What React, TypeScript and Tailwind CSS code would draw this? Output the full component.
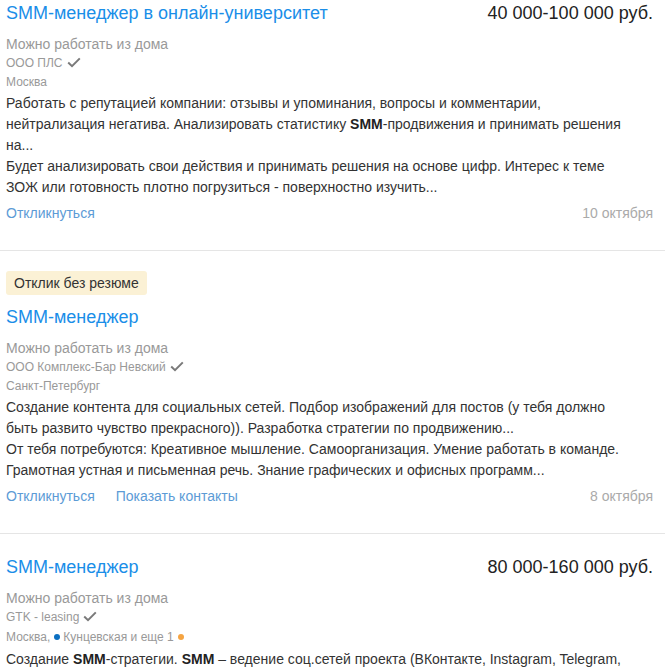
import React from 'react';

function Check() {
  return (
    <svg width="14" height="11" viewBox="0 0 14 11" className="inline-block ml-[4px] align-[-1px]">
      <path d="M1.2 5.6 L5 9.2 L12.8 1.4" fill="none" stroke="#7a7a7a" strokeWidth="2" />
    </svg>
  );
}

function Dot({ color }: { color: string }) {
  return <span className={`inline-block w-[6px] h-[6px] rounded-full mx-[4px] align-[1px] ${color}`} />;
}

type Vacancy = {
  badge?: boolean;
  title: string;
  salary?: string;
  company: string;
  city: React.ReactNode;
  desc: React.ReactNode;
  contacts?: boolean;
  date?: string;
  pt: string;
};

const vacancies: Vacancy[] = [
  {
    title: 'SMM-менеджер в онлайн-университет',
    salary: '40 000-100 000 руб.',
    company: 'ООО ПЛС',
    city: 'Москва',
    desc: (
      <>
        <p>
          Работать с репутацией компании: отзывы и упоминания, вопросы и комментарии, нейтрализация негатива.
          Анализировать статистику <b className="text-[#222]">SMM</b>-продвижения и принимать решения на...
        </p>
        <p>
          Будет анализировать свои действия и принимать решения на основе цифр. Интерес к теме ЗОЖ или готовность
          плотно погрузиться - поверхностно изучить...
        </p>
      </>
    ),
    date: '10 октября',
    pt: 'pt-[3px]',
  },
  {
    badge: true,
    title: 'SMM-менеджер',
    company: 'ООО Комплекс-Бар Невский',
    city: 'Санкт-Петербург',
    desc: (
      <>
        <p>
          Создание контента для социальных сетей. Подбор изображений для постов (у тебя должно быть развито чувство
          прекрасного)). Разработка стратегии по продвижению...
        </p>
        <p>
          От тебя потребуются: Креативное мышление. Самоорганизация. Умение работать в команде. Грамотная устная и
          письменная речь. Знание графических и офисных программ...
        </p>
      </>
    ),
    contacts: true,
    date: '8 октября',
    pt: 'pt-[20px]',
  },
  {
    title: 'SMM-менеджер',
    salary: '80 000-160 000 руб.',
    company: 'GTK - leasing',
    city: (
      <>
        Москва,
        <Dot color="bg-[#0b6fc1]" />
        <span className="-ml-[1px]">Кунцевская и еще 1</span>
        <Dot color="bg-[#f5a442]" />
      </>
    ),
    desc: (
      <p>
        Создание <b className="text-[#222]">SMM</b>-стратегии. <b className="text-[#222]">SMM</b> – ведение
        соц.сетей проекта (ВКонтакте, Instagram, Telegram, YouTube) и ведение рекламных кампаний...
      </p>
    ),
    date: '5 октября',
    pt: 'pt-[23px]',
  },
];

export default function App() {
  return (
    <div className="w-[665px] h-[667px] overflow-hidden bg-white font-['Liberation_Sans',Arial,sans-serif] text-[#333]">
      {vacancies.map((v, i) => (
        <div key={i} className={`${v.pt} pb-[27px] pl-[6px] pr-[12px] border-b border-[#e5e5e5]`}>
          {v.badge && (
            <div className="inline-block bg-[#fbf1d5] rounded-[3px] px-[8px] h-[24px] leading-[24px] text-[14px] text-[#333] mb-[12px]">
              Отклик без резюме
            </div>
          )}
          <div className="flex justify-between items-baseline leading-[20px] text-[18px]">
            <span className="text-[#1a8ee8]">{v.title}</span>
            {v.salary && <span className="text-[#222]">{v.salary}</span>}
          </div>
          <div className="mt-[11px] text-[14px] leading-[20px] text-[#999]">Можно работать из дома</div>
          <div className="text-[12px] leading-[19px] text-[#999]">
            {v.company}
            <Check />
          </div>
          <div className={`text-[12px] ${v.badge || i === 0 ? 'leading-[18px]' : 'leading-[20px]'} text-[#999]`}>{v.city}</div>
          <div className="mt-[2px] max-w-[632px] text-[14px] leading-[21px] text-[#333]">{v.desc}</div>
          <div className="mt-[5px] flex items-center text-[14px] leading-[20px]">
            <span className="text-[#5c9bd6]">Откликнуться</span>
            {v.contacts && <span className="ml-[21px] text-[#5c9bd6]">Показать контакты</span>}
            <span className="ml-auto text-[#aaa]">{v.date}</span>
          </div>
        </div>
      ))}
    </div>
  );
}
